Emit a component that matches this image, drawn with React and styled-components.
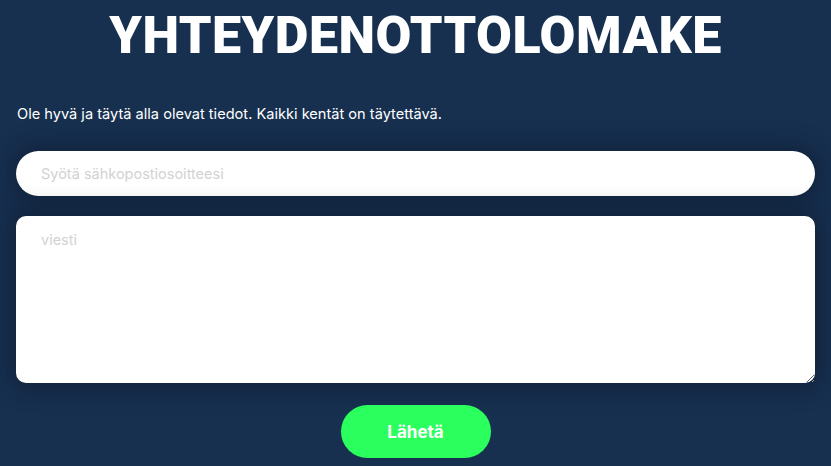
import styled, { createGlobalStyle } from 'styled-components'

const GlobalStyle = createGlobalStyle`
  html, body {
    margin: 0;
    padding: 0;
    background-color: #173050;
  }
  body {
    font-family: 'Inter', 'Roboto', sans-serif;
  }
`

export default function App() {
  return (
    <>
      <GlobalStyle />
      <Page>
        <Title>YHTEYDENOTTOLOMAKE</Title>
        <Intro>Ole hyvä ja täytä alla olevat tiedot. Kaikki kentät on täytettävä.</Intro>
        <Form onSubmit={e => e.preventDefault()}>
          <Input type="email" placeholder="Syötä sähkopostiosoitteesi" />
          <Message placeholder="viesti" />
          <Submit type="submit">Lähetä</Submit>
        </Form>
      </Page>
    </>
  )
}

const Page = styled.div`
  display: flex;
  flex-direction: column;
  padding: 0 16px;
  min-height: 466px;
  box-sizing: border-box;
  color: #ffffff;
`

const Title = styled.h1`
  margin: 0;
  padding-top: 6px;
  text-align: center;
  font-family: 'Roboto', sans-serif;
  font-weight: 900;
  font-size: 52px;
  line-height: 60px;
  letter-spacing: 0.5px;
  color: #ffffff;
`

const Intro = styled.p`
  margin: 38px 0 0 1px;
  font-family: 'Inter', sans-serif;
  font-size: 14.6px;
  line-height: 20px;
  color: #ffffff;
`

const Form = styled.form`
  display: flex;
  flex-direction: column;
  align-items: center;
  margin-top: 27px;
`

const Input = styled.input`
  all: unset;
  box-sizing: border-box;
  width: 100%;
  height: 45px;
  padding: 0 25px;
  background-color: #ffffff;
  border-radius: 23px;
  box-shadow: 0 0 22px 6px rgba(10, 20, 35, 0.45);
  font-family: 'Inter', sans-serif;
  font-size: 14.5px;
  color: #333;
  &::placeholder {
    color: #d2d2d2;
  }
`

const Message = styled.textarea`
  box-sizing: border-box;
  width: 100%;
  height: 167px;
  margin-top: 20px;
  padding: 15px 25px;
  border: none;
  outline: none;
  background-color: #ffffff;
  border-radius: 10px;
  box-shadow: 0 0 22px 6px rgba(10, 20, 35, 0.45);
  font-family: 'Inter', sans-serif;
  font-size: 14.5px;
  color: #333;
  &::placeholder {
    color: #d2d2d2;
  }
`

const Submit = styled.button`
  all: unset;
  display: flex;
  justify-content: center;
  align-items: center;
  width: 150px;
  height: 53px;
  margin-top: 22px;
  background-color: #2bff5e;
  border-radius: 27px;
  font-family: 'Inter', sans-serif;
  font-weight: 700;
  font-size: 17px;
  color: #ffffff;
  cursor: pointer;
`
